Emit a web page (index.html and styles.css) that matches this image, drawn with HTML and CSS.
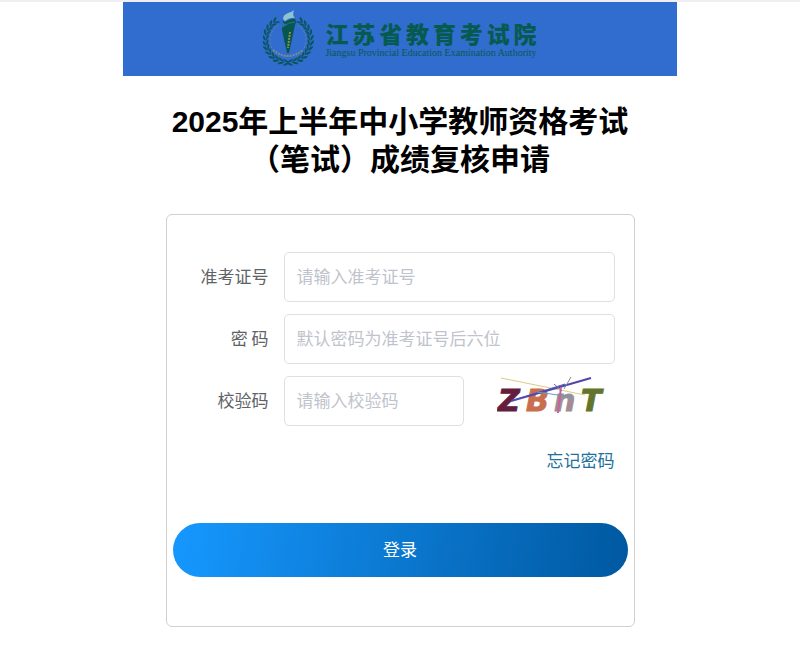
FILE: index.html
```html
<!DOCTYPE html>
<html lang="zh-CN">
<head>
  <meta charset="UTF-8">
  <meta name="viewport" content="width=device-width, initial-scale=1">
  <title>成绩复核申请 - 江苏省教育考试院</title>
  <link rel="stylesheet" href="styles.css">
</head>
<body>
  <header class="banner">
    <svg class="emblem" viewBox="0 0 52 58" aria-hidden="true">
      <defs>
        <g id="leaf">
          <path d="M-3 22 Q1 19 4 19 Q2 23 -3 22Z"/>
          <path d="M-3 22 Q3 23 3 26 Q-1 26 -3 22Z"/>
        </g>
        <!-- one half of the wreath, from the bottom up -->
        <g id="branch">
          <use href="#leaf" transform="rotate(-4)"/>
          <use href="#leaf" transform="rotate(-17)"/>
          <use href="#leaf" transform="rotate(-30)"/>
          <use href="#leaf" transform="rotate(-43)"/>
          <use href="#leaf" transform="rotate(-56)"/>
          <use href="#leaf" transform="rotate(-69)"/>
          <use href="#leaf" transform="rotate(-82)"/>
          <use href="#leaf" transform="rotate(-95)"/>
          <use href="#leaf" transform="rotate(-108)"/>
          <use href="#leaf" transform="rotate(-121)"/>
          <use href="#leaf" transform="rotate(-134)"/>
          <use href="#leaf" transform="rotate(-146)"/>
        </g>
      </defs>
      <g transform="translate(25 30)" fill="#0b5460">
        <use href="#branch"/>
        <use href="#branch" transform="scale(-1 1)"/>
      </g>
      <path d="M15 15 A18 18 0 0 0 10 40" fill="none" stroke="#6f84a8" stroke-dasharray="2 2"/>
      <path d="M35 15 A18 18 0 0 1 40 40" fill="none" stroke="#6f84a8" stroke-dasharray="2 2"/>
      <path d="M10 40 Q25 52 40 40" fill="none" stroke="#808c88" stroke-width="2" stroke-dasharray="2 1"/>
      <path d="M20 9 Q20 5 25 3 Q29 2 31 0 Q29 5 32 8 Q27 7 22 11Z" fill="#8fc3cf"/>
      <path d="M20 9 Q19 11 22 12 Q29 8 32 9 Q34 11 32 15 L26 43 L24 43 L19 20 Q18 16 24 14 Q18 14 20 9Z" fill="#07564f"/>
      <path d="M20 17 Q25 12 32 12" fill="none" stroke="#2f7584"/>
      <path d="M27 22 L25 38" fill="none" stroke="#8c9149" stroke-width="2" stroke-dasharray="2 1"/>
    </svg>
    <div class="brand">
      <p class="brand-cn">江苏省教育考试院</p>
      <p class="brand-en">Jiangsu Provincial Education Examination Authority</p>
    </div>
  </header>

  <main>
    <h1>2025年上半年中小学教师资格考试<br>（笔试）成绩复核申请</h1>
    <form class="login-form">
      <div class="form-row">
        <label for="ticket">准考证号</label>
        <input type="text" id="ticket" name="ticket" placeholder="请输入准考证号" autocomplete="off">
      </div>
      <div class="form-row">
        <label for="password">密 码</label>
        <input type="password" id="password" name="password" placeholder="默认密码为准考证号后六位">
      </div>
      <div class="form-row">
        <label for="code">校验码</label>
        <div class="code-group">
          <input type="text" id="code" name="code" placeholder="请输入校验码" autocomplete="off">
          <svg class="captcha" viewBox="0 0 118 49" role="img" aria-label="校验码图片">
            <g class="captcha-text">
              <text x="1" y="34" fill="#641d3d" stroke="#641d3d">Z</text>
              <text x="29" y="34" fill="#c96f50" stroke="#c96f50">B</text>
              <text x="57" y="34" fill="#a28d94" stroke="#a28d94">n</text>
              <text x="84" y="34" fill="#63752a" stroke="#63752a">T</text>
            </g>
            <g fill="none">
              <path d="M4 1 L88 18" stroke="#dccb83"/>
              <path d="M14 24 L94 1" stroke="#5146a5" stroke-width="2"/>
              <path d="M17 23 L68 7" stroke="#4a55c4"/>
              <path d="M40 15 L75 20" stroke="#55a5c3"/>
              <path d="M74 0 L67 12" stroke="#8c8192"/>
              <path d="M57 7 L65 14" stroke="#7a6bae"/>
              <path d="M64 10 L61 36" stroke="#c0649b" stroke-width="2"/>
            </g>
          </svg>
        </div>
      </div>
      <div class="forgot">
        <a href="#">忘记密码</a>
      </div>
      <button type="submit">登录</button>
    </form>
  </main>
</body>
</html>
```
FILE: styles.css
```css
:root {
  --banner-bg: #306dce;
  --brand-color: #075a50;
  --border-color: #dcdfe6;
  --card-border: #d0d0d0;
  --text-color: #606266;
  --link-color: #20719b;
}
* {
  box-sizing: border-box;
  margin: 0;
  padding: 0;
}
body {
  font-family: "Liberation Sans", "Noto Sans CJK SC", sans-serif;
  font-size: 17px;
  color: var(--text-color);
  background: #fff;
  border-top: 2px solid #f0f0f2;
}
.banner {
  display: flex;
  justify-content: center;
  align-items: center;
  gap: 10px;
  max-width: 554px;
  min-height: 74px;
  margin: 0 auto;
  background: var(--banner-bg);
}
.emblem {
  width: 52px;
  height: 58px;
}
.brand {
  padding-top: 4px;
  color: var(--brand-color);
}
.brand-cn {
  font-size: 23px;
  font-weight: 900;
  line-height: 24px;
  text-align: justify;
  text-align-last: justify;
}
.brand-en {
  font-family: "Liberation Serif", serif;
  font-size: 10px;
  line-height: 12px;
}
main {
  max-width: 469px;
  margin: 0 auto;
}
h1 {
  margin: 27px 0 35px;
  font-size: 30px;
  font-weight: 700;
  line-height: 38px;
  text-align: center;
  white-space: nowrap;
  color: #000;
}
.login-form {
  padding: 37px 6px 49px;
  border: 1px solid var(--card-border);
  border-radius: 6px;
  font-family: "Noto Sans CJK SC", sans-serif;
}
.form-row {
  display: grid;
  grid-template-columns: 96px 1fr;
  align-items: center;
  gap: 15px;
  margin: 0 13px 12px 0;
}
.form-row label {
  padding-bottom: 4px;
  text-align: right;
}
.form-row input {
  width: 100%;
  height: 50px;
  padding: 0 12px 4px;
  border: 1px solid var(--border-color);
  border-radius: 5px;
  font-family: inherit;
  font-size: 17px;
  color: var(--text-color);
  outline: none;
}
.form-row input:focus {
  border-color: #409eff;
}
.form-row input::placeholder {
  color: #bfc3cc;
}
.code-group {
  display: flex;
  align-items: center;
  justify-content: space-between;
}
.code-group input {
  width: 180px;
}
.captcha {
  width: 118px;
  height: 49px;
}
.captcha-text {
  font-family: "DejaVu Sans", sans-serif;
  font-size: 30px;
  font-weight: 700;
  font-style: italic;
}
.forgot {
  margin: 0 13px 41px 0;
  line-height: 44px;
  text-align: right;
}
.forgot a {
  color: var(--link-color);
  text-decoration: none;
}
button {
  display: block;
  width: 100%;
  height: 54px;
  padding-bottom: 3px;
  border: none;
  border-radius: 27px;
  font-family: inherit;
  font-size: 17px;
  color: #fff;
  background: linear-gradient(100deg, #1698ff, #0058a0);
  cursor: pointer;
}
```
